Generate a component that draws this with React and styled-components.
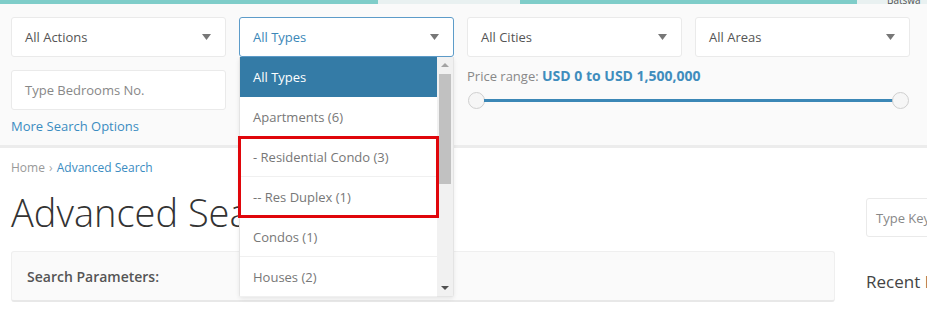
import React from 'react';
import styled, { createGlobalStyle } from 'styled-components';

const GlobalStyle = createGlobalStyle`
  html, body {
    margin: 0;
    padding: 0;
    background: #fff;
    font-family: 'Open Sans', 'Liberation Sans', sans-serif;
    overflow: hidden;
  }
  * { box-sizing: border-box; }
`;

const types = [
  { label: 'All Types', active: true },
  { label: 'Apartments (6)' },
  { label: '- Residential Condo (3)' },
  { label: '-- Res Duplex (1)' },
  { label: 'Condos (1)' },
  { label: 'Houses (2)' },
];

const Caret = () => (
  <svg width="9" height="6" viewBox="0 0 9 6">
    <path d="M0 0 L9 0 L4.5 6 Z" fill="#777" />
  </svg>
);

const App = () => {
  return (
    <Page>
      <GlobalStyle />
      <TopStrip>
        <StripPart $w="378px" />
        <StripPart $w="142px" $light />
        <StripPart $w="337px" />
        <StripPart $light $grow>
          <small>Batswa</small>
        </StripPart>
      </TopStrip>

      <SearchPanel>
        <FieldGrid>
          <Select>
            <span>All Actions</span>
            <Caret />
          </Select>
          <SelectWrap>
            <Select $focused>
              <span>All Types</span>
              <Caret />
            </Select>
            <Dropdown>
              <Options>
                {types.map((t) => (
                  <Option key={t.label} $active={t.active}>
                    {t.label}
                  </Option>
                ))}
              </Options>
              <Scrollbar>
                <ScrollArrow $up />
                <ScrollTrack>
                  <ScrollThumb />
                </ScrollTrack>
                <ScrollArrow />
              </Scrollbar>
              <Highlight />
            </Dropdown>
          </SelectWrap>
          <Select>
            <span>All Cities</span>
            <Caret />
          </Select>
          <Select>
            <span>All Areas</span>
            <Caret />
          </Select>

          <TextField>Type Bedrooms No.</TextField>
          <span />
          <PriceRange>
            <PriceLabel>
              Price range: <strong>USD 0 to USD 1,500,000</strong>
            </PriceLabel>
            <Slider>
              <Handle />
              <Track />
              <Handle />
            </Slider>
          </PriceRange>
        </FieldGrid>
        <MoreLink>More Search Options</MoreLink>
      </SearchPanel>

      <Content>
        <MainColumn>
          <Breadcrumb>
            Home <Sep>›</Sep> <a>Advanced Search</a>
          </Breadcrumb>
          <Title>Advanced Search</Title>
          <ParamsBox>Search Parameters:</ParamsBox>
        </MainColumn>
        <Sidebar>
          <KeywordInput>Type Keyword</KeywordInput>
          <SideHeading>Recent Posts</SideHeading>
        </Sidebar>
      </Content>
    </Page>
  );
};

const Page = styled.div`
  width: 927px;
  height: 309px;
  overflow: hidden;
`;

const TopStrip = styled.div`
  display: flex;
  height: 4px;
`;

const StripPart = styled.div`
  width: ${(p) => p.$w || 'auto'};
  flex: ${(p) => (p.$grow ? 1 : 'none')};
  background: ${(p) => (p.$light ? '#e9f1f1' : '#7fcdc9')};
  overflow: hidden;
  position: relative;

  small {
    position: absolute;
    left: 30px;
    top: -7px;
    font-size: 10px;
    color: #555;
  }
`;

const SearchPanel = styled.div`
  background: #fafafa;
  border-bottom: 3px solid #ececec;
  padding: 13px 11px 10px;
`;

const FieldGrid = styled.div`
  display: grid;
  grid-template-columns: repeat(4, 215px);
  column-gap: 13px;
  row-gap: 13px;
`;

const Select = styled.div`
  height: 40px;
  display: flex;
  align-items: center;
  justify-content: space-between;
  padding: 0 14px 0 13px;
  background: #fff;
  border: 1px solid ${(p) => (p.$focused ? '#5d9cc9' : '#eaeaea')};
  border-radius: 3px;
  font-size: 13px;
  color: ${(p) => (p.$focused ? '#3b87b8' : '#555')};
`;

const SelectWrap = styled.div`
  position: relative;
`;

const Dropdown = styled.div`
  position: absolute;
  top: 40px;
  left: 0;
  width: 215px;
  height: 240px;
  display: flex;
  background: #fff;
  border: 1px solid #e4e4e4;
  border-top: none;
  border-radius: 0 0 3px 3px;
  box-shadow: 0 2px 4px rgba(0, 0, 0, 0.08);
  z-index: 10;
`;

const Options = styled.ul`
  list-style: none;
  margin: 0;
  padding: 0;
  flex: 1;
`;

const Option = styled.li`
  height: 40px;
  display: flex;
  align-items: center;
  padding-left: 13px;
  font-size: 13px;
  color: ${(p) => (p.$active ? '#fff' : '#777')};
  background: ${(p) => (p.$active ? '#347ba6' : '#fff')};
  border-bottom: 1px solid ${(p) => (p.$active ? '#347ba6' : '#f0f0f0')};
`;

const Scrollbar = styled.div`
  width: 16px;
  display: flex;
  flex-direction: column;
  background: #f1f1f1;
`;

const ScrollArrow = styled.div`
  height: 16px;
  display: flex;
  align-items: center;
  justify-content: center;

  &::before {
    content: '';
    border-left: 4px solid transparent;
    border-right: 4px solid transparent;
    ${(p) =>
      p.$up ? 'border-bottom: 4px solid #a3a3a3;' : 'border-top: 4px solid #505050;'}
  }
`;

const ScrollTrack = styled.div`
  flex: 1;
  padding: 1px 2px;
`;

const ScrollThumb = styled.div`
  height: 110px;
  background: #c1c1c1;
`;

const Highlight = styled.div`
  position: absolute;
  left: -2px;
  top: 79px;
  width: 201px;
  height: 82px;
  border: 3px solid #e0060b;
  pointer-events: none;
`;

const TextField = styled.div`
  height: 40px;
  display: flex;
  align-items: center;
  padding-left: 13px;
  background: #fff;
  border: 1px solid #eaeaea;
  border-radius: 3px;
  font-size: 13px;
  color: #888;
`;

const PriceRange = styled.div`
  grid-column: 3 / span 2;
  display: flex;
  flex-direction: column;
  gap: 9px;
`;

const PriceLabel = styled.div`
  margin-top: -1px;
  font-size: 13px;
  line-height: 14px;
  color: #888;

  strong {
    font-size: 14px;
    color: #3f8dbd;
    font-weight: 700;
  }
`;

const Slider = styled.div`
  display: flex;
  align-items: center;
  padding-left: 1px;
  width: 442px;
`;

const Handle = styled.div`
  width: 17px;
  height: 17px;
  flex: none;
  border-radius: 50%;
  background: #f6f6f6;
  border: 1px solid #cfcfcf;
`;

const Track = styled.div`
  flex: 1;
  height: 3px;
  margin: 0 -1px;
  background: #3b87b6;
`;

const MoreLink = styled.a`
  display: block;
  margin-top: 7px;
  font-size: 13px;
  line-height: 18px;
  color: #3b8cc1;
`;

const Content = styled.div`
  display: flex;
  padding: 0 0 0 11px;
  gap: 31px;
`;

const MainColumn = styled.div`
  width: 824px;
  flex: none;
`;

const Breadcrumb = styled.div`
  margin-top: 11px;
  font-size: 12px;
  line-height: 18px;
  color: #999;

  a {
    color: #3b8cc1;
  }
`;

const Sep = styled.span`
  color: #aaa;
  margin: 0 1px;
`;

const Title = styled.h1`
  margin: 11px 0 0;
  font-size: 38px;
  line-height: 48px;
  font-weight: 300;
  color: #333;
  white-space: nowrap;
`;

const ParamsBox = styled.div`
  margin-top: 15px;
  height: 51px;
  display: flex;
  align-items: center;
  padding-left: 15px;
  background: #fafafa;
  border: 1px solid #efefef;
  border-bottom: 2px solid #e8e8e8;
  border-radius: 3px;
  font-size: 14px;
  font-weight: 600;
  color: #555;
`;

const Sidebar = styled.div`
  flex: none;
  width: 240px;
`;

const KeywordInput = styled.div`
  margin-top: 50px;
  height: 39px;
  display: flex;
  align-items: center;
  padding-left: 9px;
  background: #fff;
  border: 1px solid #eaeaea;
  border-radius: 3px;
  font-size: 13px;
  color: #888;
`;

const SideHeading = styled.div`
  margin-top: 33px;
  font-size: 17px;
  color: #444;
`;

export default App;
